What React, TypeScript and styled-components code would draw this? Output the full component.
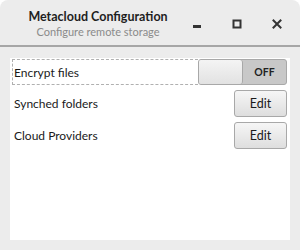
import styled, { createGlobalStyle } from "styled-components";

const GlobalStyle = createGlobalStyle`
  html, body {
    margin: 0;
    padding: 0;
    background: #ffffff;
  }
  * {
    box-sizing: border-box;
  }
`;

function App() {
  return (
    <>
      <GlobalStyle />
      <Window>
        <TitleBar>
          <TitleBlock>
            <Title>Metacloud Configuration</Title>
            <Subtitle>Configure remote storage</Subtitle>
          </TitleBlock>
          <Controls>
            <ControlButton aria-label="minimize">
              <svg width="10" height="10" viewBox="0 0 10 10">
                <rect x="1" y="6" width="8" height="3" fill="#333" />
              </svg>
            </ControlButton>
            <ControlButton aria-label="maximize">
              <svg width="10" height="10" viewBox="0 0 10 10">
                <rect x="1.5" y="1.5" width="7" height="7" fill="none" stroke="#333" strokeWidth="2" />
              </svg>
            </ControlButton>
            <ControlButton aria-label="close">
              <svg width="10" height="10" viewBox="0 0 10 10">
                <path d="M1.5 1.5 L8.5 8.5 M8.5 1.5 L1.5 8.5" stroke="#333" strokeWidth="2" strokeLinecap="square" />
              </svg>
            </ControlButton>
          </Controls>
        </TitleBar>
        <Panel>
          <Row>
            <Label focused>Encrypt files</Label>
            <Toggle>
              <Thumb />
              <ToggleText>OFF</ToggleText>
            </Toggle>
          </Row>
          <Row>
            <Label>Synched folders</Label>
            <EditButton>Edit</EditButton>
          </Row>
          <Row>
            <Label>Cloud Providers</Label>
            <EditButton>Edit</EditButton>
          </Row>
        </Panel>
      </Window>
    </>
  );
}

export default App;

const Window = styled.div`
  width: 300px;
  height: 250px;
  background: #ececec;
  border-radius: 8px 8px 0 0;
  display: flex;
  flex-direction: column;
  font-family: Lato, "Noto Sans", sans-serif;
  overflow: hidden;
`;

const TitleBar = styled.div`
  height: 47px;
  flex-shrink: 0;
  display: flex;
  align-items: center;
  border-bottom: 2px solid #a6a6a6;
`;

const TitleBlock = styled.div`
  width: 196px;
  display: flex;
  flex-direction: column;
  align-items: center;
  padding-top: 2px;
`;

const Title = styled.div`
  font-size: 12.5px;
  font-weight: 700;
  color: #1e1e1e;
  line-height: 17px;
`;

const Subtitle = styled.div`
  font-size: 11px;
  color: #8a8a8a;
  line-height: 14px;
`;

const Controls = styled.div`
  display: flex;
  margin-left: -19px;
`;

const ControlButton = styled.div`
  width: 40px;
  height: 20px;
  display: flex;
  align-items: center;
  justify-content: center;
  margin-top: 3px;
`;

const Panel = styled.div`
  margin: 11px 10px 10px 10px;
  flex: 1;
  background: #ffffff;
  padding: 1px 3px 2px 2px;
  display: flex;
  flex-direction: column;
  gap: 5px;
`;

const Row = styled.div`
  display: flex;
  align-items: stretch;
  height: 26px;
  & + & {
    height: 27px;
  }
`;

const Label = styled.div<{ focused?: boolean }>`
  flex: 1;
  display: flex;
  align-items: center;
  padding-left: 1px;
  font-size: 12px;
  color: #1a1a1a;
  border: 1px dashed ${(p) => (p.focused ? "#b0b0b0" : "transparent")};
  border-right: none;
`;

const Toggle = styled.div`
  width: 89px;
  display: flex;
  border: 1px solid #a8a8a8;
  border-radius: 3px;
  background: #c8c8c8;
  overflow: hidden;
`;

const Thumb = styled.div`
  width: 44px;
  background: linear-gradient(#f4f4f4, #e2e2e2);
  border-right: 1px solid #a8a8a8;
  border-radius: 0 3px 3px 0;
`;

const ToggleText = styled.div`
  flex: 1;
  display: flex;
  align-items: center;
  justify-content: center;
  font-size: 10.5px;
  font-weight: 700;
  color: #222;
`;

const EditButton = styled.button`
  width: 53px;
  padding: 0;
  border: 1px solid #a8a8a8;
  border-radius: 3px;
  background: linear-gradient(#f6f6f6, #dedede);
  font-family: Lato, "Noto Sans", sans-serif;
  font-size: 12.5px;
  color: #1a1a1a;
`;
